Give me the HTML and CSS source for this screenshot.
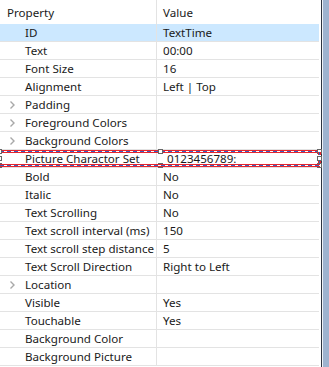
FILE: index.html
```html
<!DOCTYPE html>
<html lang="en">
<head>
  <meta charset="UTF-8" />
  <title>Properties</title>
  <link rel="stylesheet" href="styles.css">
</head>
<body>
  <div class="panel">
    <div class="grid">
      <div class="row head">
        <div class="name">Property</div>
        <div class="value">Value</div>
      </div>
      <div class="row selected"><div class="name sub">ID</div><div class="value">TextTime</div></div>
      <div class="row"><div class="name sub">Text</div><div class="value">00:00</div></div>
      <div class="row"><div class="name sub">Font Size</div><div class="value">16</div></div>
      <div class="row"><div class="name sub">Alignment</div><div class="value">Left | Top</div></div>
      <div class="row"><div class="name sub"><svg class="arrow" width="5" height="8" viewBox="0 0 5 8"><polyline points="0.5,0.5 4,4 0.5,7.5" fill="none" stroke="#a8a8a8" stroke-width="1.4"/></svg>Padding</div><div class="value"></div></div>
      <div class="row"><div class="name sub"><svg class="arrow" width="5" height="8" viewBox="0 0 5 8"><polyline points="0.5,0.5 4,4 0.5,7.5" fill="none" stroke="#a8a8a8" stroke-width="1.4"/></svg>Foreground Colors</div><div class="value"></div></div>
      <div class="row"><div class="name sub"><svg class="arrow" width="5" height="8" viewBox="0 0 5 8"><polyline points="0.5,0.5 4,4 0.5,7.5" fill="none" stroke="#a8a8a8" stroke-width="1.4"/></svg>Background Colors</div><div class="value"></div></div>
      <div class="row marked">
        <div class="name sub">Picture Charactor Set</div><div class="value indent">0123456789:</div>
        <div class="mark">
          <span class="handle tl"></span><span class="handle ml"></span><span class="handle bl"></span>
          <span class="handle tc"></span><span class="handle bc"></span>
          <span class="handle tr"></span><span class="handle mr"></span><span class="handle br"></span>
        </div>
      </div>
      <div class="row"><div class="name sub">Bold</div><div class="value">No</div></div>
      <div class="row"><div class="name sub">Italic</div><div class="value">No</div></div>
      <div class="row"><div class="name sub">Text Scrolling</div><div class="value">No</div></div>
      <div class="row"><div class="name sub">Text scroll interval (ms)</div><div class="value">150</div></div>
      <div class="row"><div class="name sub">Text scroll step distance</div><div class="value">5</div></div>
      <div class="row"><div class="name sub">Text Scroll Direction</div><div class="value">Right to Left</div></div>
      <div class="row"><div class="name sub"><svg class="arrow" width="5" height="8" viewBox="0 0 5 8"><polyline points="0.5,0.5 4,4 0.5,7.5" fill="none" stroke="#a8a8a8" stroke-width="1.4"/></svg>Location</div><div class="value"></div></div>
      <div class="row"><div class="name sub">Visible</div><div class="value">Yes</div></div>
      <div class="row"><div class="name sub">Touchable</div><div class="value">Yes</div></div>
      <div class="row"><div class="name sub">Background Color</div><div class="value"></div></div>
      <div class="row"><div class="name sub">Background Picture</div><div class="value"></div></div>
    </div>
    <div class="edge"></div>
  </div>
</body>
</html>
```

FILE: styles.css
```css
html, body {
  margin: 0;
  padding: 0;
  background: #fff;
}

body {
  font-family: "Noto Sans", "Noto Sans CJK KR", sans-serif;
  font-size: 11.6px;
  color: #1a1a1a;
  width: 329px;
  height: 367px;
  overflow: hidden;
}

.panel {
  display: flex;
  height: 367px;
}

.grid {
  width: 322px;
}

.row {
  position: relative;
  display: grid;
  grid-template-columns: 157px 1fr;
  height: 18px;
  box-sizing: border-box;
  border-bottom: 1px solid #e3e3e3;
}

.row.head {
  height: 24px;
  border-bottom: none;
}

.name {
  border-right: 1px solid #e3e3e3;
  padding-left: 7px;
  display: flex;
  align-items: center;
  white-space: nowrap;
  line-height: 17px;
}

.name.sub {
  position: relative;
  padding-left: 25px;
}

.value {
  padding-left: 6px;
  display: flex;
  align-items: center;
  white-space: nowrap;
  line-height: 17px;
}

.value.indent {
  padding-left: 10px;
}

.selected {
  background: #cce8ff;
}

.arrow {
  position: absolute;
  left: 10px;
  top: 5px;
}

.edge {
  width: 7px;
  margin-left: 2px;
  border-left: 1px solid #2d3440;
  background: linear-gradient(to right, #eef2f7 0, #eef2f7 1px, #9eb3cf 1px);
}

/* design-time selection frame */
.mark {
  position: absolute;
  left: 0;
  top: 0;
  width: 322px;
  height: 17px;
  pointer-events: none;
}

.mark::before,
.mark::after {
  content: "";
  position: absolute;
  left: 0;
  width: 320px;
  height: 3px;
  background:
    repeating-linear-gradient(to right, #3b5fc0 0 4px, #fff 4px 7px) 0 1px / 100% 1px no-repeat,
    #e8242c;
}

.mark::before {
  top: 0;
}

.mark::after {
  bottom: 0;
}

.handle {
  position: absolute;
  width: 3px;
  height: 3px;
  border: 1px solid #666;
  background: #fff;
}

.tl { left: -3px; top: -1px; }
.ml { left: -3px; top: 6px; }
.bl { left: -3px; top: 13px; }
.tc { left: 158px; top: -1px; }
.bc { left: 158px; top: 13px; }
.tr { left: 317px; top: -1px; }
.mr { left: 317px; top: 6px; }
.br { left: 317px; top: 13px; }

.mr::before,
.mr::after {
  content: "";
  position: absolute;
  left: 0;
  width: 3px;
  height: 3px;
  background: linear-gradient(to right, #e8242c 0 1px, #3b5fc0 1px 2px, #e8242c 2px);
}

.mr::before {
  top: -5px;
}

.mr::after {
  top: 4px;
}
```
